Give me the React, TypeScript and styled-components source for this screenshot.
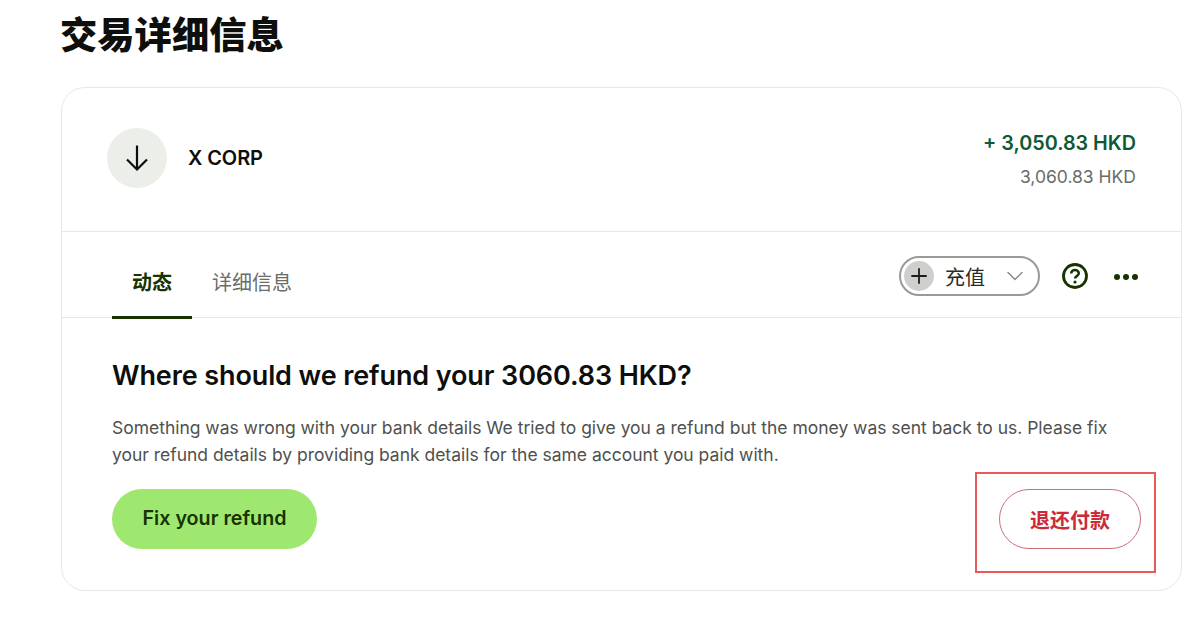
import React from 'react'
import styled, { createGlobalStyle } from 'styled-components'
import { ChevronDown, Plus } from 'lucide-react'

const GlobalStyle = createGlobalStyle`
  html, body {
    margin: 0;
    background: #fff;
    font-family: Inter, "Noto Sans CJK SC", sans-serif;
    color: #0e0f0c;
  }
`

const Page = styled.div`
  width: 1199px;
  height: 623px;
  box-sizing: border-box;
  padding: 10px 17px 0 60px;
  overflow: hidden;
`

const Title = styled.h1`
  margin: 0 0 27px;
  height: 50px;
  font-size: 37.3px;
  line-height: 52px;
  font-weight: 800;
  color: #0e0f0c;
`

const Card = styled.div`
  position: relative;
  height: 504px;
  margin-left: 1px;
  box-sizing: border-box;
  border: 1px solid #e8e9e7;
  border-radius: 24px;
`

const Header = styled.div`
  display: flex;
  justify-content: space-between;
  align-items: center;
  height: 144px;
  box-sizing: border-box;
  padding: 0 45px;
  border-bottom: 1px solid #e8e9e7;
`

const Party = styled.div`
  display: flex;
  align-items: center;
  gap: 21px;
  margin-bottom: 3px;
`

const IconCircle = styled.div`
  display: flex;
  align-items: center;
  justify-content: center;
  width: 60px;
  height: 60px;
  border-radius: 50%;
  background: #eceeea;
`

const PartyName = styled.span`
  font-size: 20px;
  font-weight: 600;
  letter-spacing: -0.1px;
`

const Amounts = styled.div`
  display: flex;
  flex-direction: column;
  align-items: flex-end;
  gap: 11px;
`

const Amount = styled.span`
  font-size: 19.75px;
  line-height: 24px;
  font-weight: 600;
  color: #0e5a34;
`

const SubAmount = styled.span`
  font-size: 17.5px;
  line-height: 22px;
  color: #6a6c69;
`

const TabBar = styled.div`
  display: flex;
  justify-content: space-between;
  height: 86px;
  box-sizing: border-box;
  padding: 0 43px 0 50px;
  border-bottom: 1px solid #e8e9e7;
`

const Tabs = styled.div`
  display: flex;
  align-items: flex-start;
`

const Tab = styled.div<{ $active?: boolean }>`
  display: flex;
  align-items: center;
  height: 87px;
  box-sizing: border-box;
  padding: 15px 20px 0;
  font-size: 20px;
  font-weight: ${props => (props.$active ? 700 : 400)};
  color: ${props => (props.$active ? '#163300' : '#6a6c69')};
  border-bottom: 3px solid ${props => (props.$active ? '#163300' : 'transparent')};
`

const Actions = styled.div`
  display: flex;
  align-items: center;
  height: 88px;
`

const AddPill = styled.div`
  display: flex;
  align-items: center;
  width: 141px;
  height: 40px;
  box-sizing: border-box;
  padding: 0 9px 0 3px;
  margin-right: 22px;
  border: 2px solid #9a9b99;
  border-radius: 20px;
`

const PlusCircle = styled.div`
  display: flex;
  align-items: center;
  justify-content: center;
  width: 30px;
  height: 30px;
  margin-right: 11px;
  border-radius: 50%;
  background: #cfd0ce;
`

const PillLabel = styled.span`
  flex: 1;
  font-size: 20px;
  color: #2a2a28;
`

const HelpIcon = styled.svg`
  margin-right: 26px;
`

const Dots = styled.div`
  display: flex;
  gap: 3px;
  margin-top: 2px;
`

const Dot = styled.span`
  width: 6px;
  height: 6px;
  border-radius: 50%;
  background: #163300;
`

const Body = styled.div`
  padding: 39px 40px 0 50px;
`

const Heading = styled.h2`
  margin: 0 0 19px;
  font-size: 27px;
  line-height: 38px;
  font-weight: 600;
  letter-spacing: -0.11px;
  color: #0e0f0c;
`

const Description = styled.p`
  margin: 0 0 21px;
  font-size: 17.5px;
  line-height: 27px;
  letter-spacing: -0.02px;
  color: #4f514e;
`

const ButtonRow = styled.div`
  display: flex;
  justify-content: space-between;
`

const PrimaryButton = styled.button`
  width: 205px;
  height: 60px;
  padding: 0 0 2px;
  border: none;
  border-radius: 30px;
  background: #9fe870;
  font: 600 19.7px Inter, sans-serif;
  color: #163300;
`

const RefundButton = styled.button`
  width: 142px;
  height: 60px;
  padding: 0;
  border: 1px solid #cc6f76;
  border-radius: 30px;
  background: #fff;
  font: 700 20px Inter, "Noto Sans CJK SC", sans-serif;
  color: #cb2a36;
`

// annotation drawn over the screenshot
const Highlight = styled.div`
  position: absolute;
  left: 913px;
  top: 384px;
  width: 181px;
  height: 101px;
  box-sizing: border-box;
  border: 2px solid #e85a5a;
`

export default function App() {
  return (
    <Page>
      <GlobalStyle />
      <Title>交易详细信息</Title>
      <Card>
        <Header>
          <Party>
            <IconCircle>
              <svg width="24" height="28" viewBox="0 0 24 28" fill="none">
                <path d="M12 1.5v24M2 15.5l10 10 10-10" stroke="#0e0f0c" strokeWidth="2.2" />
              </svg>
            </IconCircle>
            <PartyName>X CORP</PartyName>
          </Party>
          <Amounts>
            <Amount>+ 3,050.83 HKD</Amount>
            <SubAmount>3,060.83 HKD</SubAmount>
          </Amounts>
        </Header>
        <TabBar>
          <Tabs>
            <Tab $active>动态</Tab>
            <Tab>详细信息</Tab>
          </Tabs>
          <Actions>
            <AddPill>
              <PlusCircle>
                <Plus size={24} strokeWidth={1.8} color="#1c1c1a" />
              </PlusCircle>
              <PillLabel>充值</PillLabel>
              <ChevronDown size={28} strokeWidth={1.3} color="#8a8b89" />
            </AddPill>
            <HelpIcon width="26" height="26" viewBox="0 0 26 26" fill="none">
              <circle cx="13" cy="13" r="11.5" stroke="#163300" strokeWidth="2.8" />
              <path
                d="M9.2 10.4c0-2.1 1.7-3.5 3.8-3.5s3.8 1.4 3.8 3.3c0 2.9-3.8 2.9-3.8 5.4"
                stroke="#163300"
                strokeWidth="2.5"
              />
              <circle cx="13" cy="19" r="1.6" fill="#163300" />
            </HelpIcon>
            <Dots>
              <Dot />
              <Dot />
              <Dot />
            </Dots>
          </Actions>
        </TabBar>
        <Body>
          <Heading>Where should we refund your 3060.83 HKD?</Heading>
          <Description>
            Something was wrong with your bank details We tried to give you a refund but the money was sent back to us. Please fix
            <br />
            your refund details by providing bank details for the same account you paid with.
          </Description>
          <ButtonRow>
            <PrimaryButton>Fix your refund</PrimaryButton>
            <RefundButton>退还付款</RefundButton>
          </ButtonRow>
        </Body>
        <Highlight />
      </Card>
    </Page>
  )
}
